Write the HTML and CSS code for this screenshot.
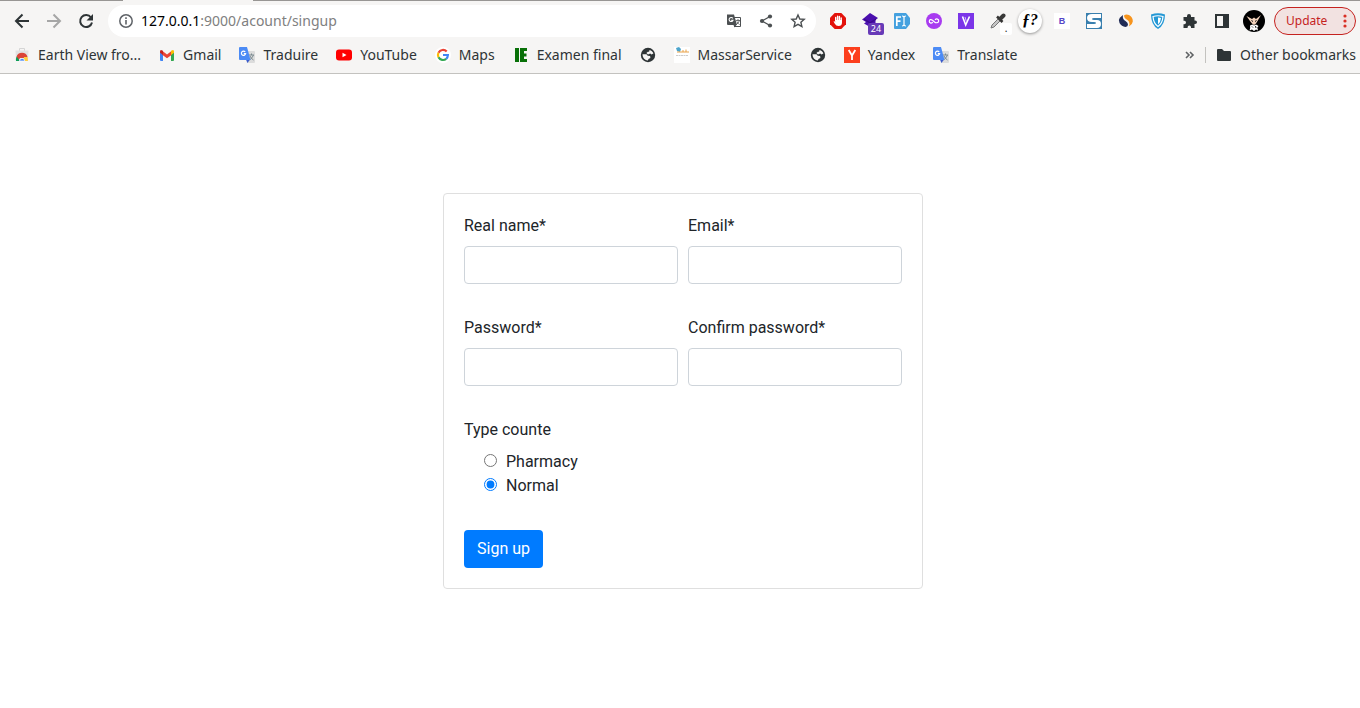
FILE: index.html
```
<!DOCTYPE html>
<html lang="en">
<head>
<meta charset="utf-8">
<title>Sign up</title>
<link rel="stylesheet" href="styles.css">
</head>
<body>
<svg class="sprites" aria-hidden="true">
  <symbol id="translate" viewBox="0 0 16 16">
    <path fill="#dcdcdc" d="M6 4h9q1 0 1 1v10q0 1-1 1H8z"/>
    <path fill="none" stroke="#7b8a90" stroke-width="1" d="M10 8h5M12.500 6.500v1.500M14.500 8q-1 3-4 5M11 9q1 2.500 3.500 4"/>
    <path fill="#3a5bcd" d="M7 12.500h4L8.500 16z"/>
    <path fill="#4c8bf5" d="M1 0h7l3.500 13H1q-1 0-1-1V1q0-1 1-1z"/>
    <path fill="none" stroke="#fff" stroke-width="1.200" d="M6.200 5A2.100 2.100 0 1 0 6.600 6.700H4.800"/>
  </symbol>
  <symbol id="globe" viewBox="0 0 16 16">
    <circle cx="8" cy="8" r="7.200" fill="#2e3436"/>
    <path fill="#f6f5f4" d="M9.500 3c1.800.4 3.300 1.600 3.900 3.500l-1.900.9-1.300-.9-2.200 1-1.600-1.400 1.500-1.400h1.200zM2.500 7.300h4l1.200 1.500 2.400.3.300 2-1.900.8-.6 1.700c-3-.3-5.300-2.700-5.400-6.300z"/>
  </symbol>
</svg>

<header class="browser">
  <div class="tabs"><span class="tab"></span></div>
  <div class="toolbar">
    <nav class="history" aria-label="History">
      <button class="tool" aria-label="Back"><svg width="16" height="16" viewBox="0 0 16 16"><path fill="none" stroke="#2e3436" stroke-width="2" d="M15 8H2M8.500 1.500L2 8l6.500 6.500"/></svg></button>
      <button class="tool" aria-label="Forward"><svg width="16" height="16" viewBox="0 0 16 16"><path fill="none" stroke="#a6a6a6" stroke-width="2" d="M1 8h13M7.500 1.500L14 8l-6.500 6.500"/></svg></button>
      <button class="tool" aria-label="Reload"><svg width="16" height="16" viewBox="0 0 16 16"><path fill="none" stroke="#2e3436" stroke-width="2" d="M13 4.500A6 6 0 1 0 14 9.500"/><path fill="#2e3436" d="M15 1v6.500H8.500z"/></svg></button>
    </nav>
    <div class="address">
      <svg width="16" height="16" viewBox="0 0 16 16"><circle cx="8" cy="8" r="6.200" fill="none" stroke="#5f6368" stroke-width="1.500"/><path fill="#5f6368" d="M7.200 7h1.600v4.500H7.200zM7.200 4.300h1.600v1.600H7.200z"/></svg>
      <a class="url" href="#">127.0.0.1<span class="path">:9000/acount/singup</span></a>
      <button class="tool" aria-label="Translate this page"><svg width="16" height="16" viewBox="0 0 16 16"><path fill="none" stroke="#4c5052" d="M8 4.500h6.500v9H8"/><path fill="#4c5052" d="M1 1.500h7l3 10.500H2q-1 0-1-1zM7.500 12h3l-2 2.500z"/><path fill="none" stroke="#fff" stroke-width="1.100" d="M6.800 5.400a2 2 0 1 0 .2 1.800H5.200"/><path fill="none" stroke="#4c5052" stroke-width=".8" d="M10 7.500h4M12 6v1.500M13.500 7.500q-1 2.500-3 4M11 8.500q1 2 2.500 3.200"/></svg></button>
      <button class="tool" aria-label="Share"><svg width="16" height="16" viewBox="0 0 16 16"><path fill="none" stroke="#4c5052" stroke-width="1.300" d="M12 3.500L4 8l8 4.500"/><g fill="#4c5052"><circle cx="12" cy="3.500" r="2.100"/><circle cx="4" cy="8" r="2.100"/><circle cx="12" cy="12.500" r="2.100"/></g></svg></button>
      <button class="tool" aria-label="Bookmark this page"><svg width="16" height="16" viewBox="0 0 16 16"><path fill="none" stroke="#4c5052" stroke-width="1.400" d="M8 2l1.800 4 4.400.4-3.300 2.900 1 4.300L8 11.300l-3.900 2.300 1-4.300-3.300-2.900L6.200 6z"/></svg></button>
    </div>
    <div class="extensions">
      <button class="tool" aria-label="Ad blocker"><svg width="16" height="16" viewBox="0 0 16 16"><path fill="#e3120b" d="M4.700 0h6.600L16 4.700v6.600L11.300 16H4.700L0 11.300V4.700z"/><path fill="none" stroke="#fff" stroke-width="1.400" stroke-linecap="round" d="M5.700 8V4.500M7.600 7V3.200M9.400 7V3.500M11.200 8V5"/><path fill="#fff" d="M5 7h7v2.500q0 3.500-3.500 3.500Q6 13 4.800 10.800L3.500 8.500q1-.7 2 .7z"/></svg></button>
      <button class="tool" aria-label="Layers, 24"><svg width="16" height="16" viewBox="0 0 16 16"><path fill="#4b0fae" d="M8 0l8 5-2.500 2v4L8 14l-6-3.500L4 9 0 6.500 2 5z"/><path fill="#3a0b8c" d="M2 5.500l6 3.500 6-3.500v1.500L8 10.500 2 7z"/></svg><span class="badge count">24</span></button>
      <button class="tool" aria-label="Font inspector"><svg width="16" height="16" viewBox="0 0 16 16"><path fill="#45a1df" d="M1 0h11l4 5v6l-4 5H1q-1 0-1-1V1q0-1 1-1z"/><path fill="none" stroke="#fff" stroke-width="1.700" d="M2.800 13V4H7M2.800 8.200h3.700"/><path fill="none" stroke="#fff" stroke-width="1.200" d="M8 3q2 0 2 1.500v7Q10 13 8 13M12 3q-2 0-2 1.500M10 11.500Q10 13 12 13"/></svg></button>
      <button class="tool" aria-label="Loop"><svg width="16" height="16" viewBox="0 0 16 16"><circle cx="8" cy="8" r="8" fill="#a83bf0"/><path fill="none" stroke="#fff" stroke-width="1.200" d="M6.800 9.200C5 10.800 3.300 9.800 3.300 8.200S5 5.900 6.500 7.300l2 1.700c1.500 1.300 4.200.8 4.200-1.100S10.500 5.300 9 6.800"/></svg></button>
      <button class="tool" aria-label="V tools"><svg width="16" height="16" viewBox="0 0 16 16"><path fill="#7b35e8" d="M0 0h16v16H0z"/><path fill="none" stroke="#fff" stroke-width="1.600" d="M4.500 3.500l3.200 8.500 3.800-8.500"/><path stroke="#d6bcff" d="M7 4l1.500 5"/></svg></button>
      <button class="tool" aria-label="Colour picker"><svg width="16" height="16" viewBox="0 0 16 16"><path fill="#c4c4c4" stroke="#777" d="M9 5l2 2-7 7-3 1 1-3z"/><path stroke="#333" stroke-width="2.500" d="M7 3.500L12.500 9"/><path stroke="#383838" stroke-width="4" stroke-linecap="round" d="M10.500 5.500L13.500 2.500"/></svg><span class="badge dot">.</span></button>
      <button class="tool" aria-label="What font"><span class="font-mark">ƒ?</span></button>
      <button class="tool" aria-label="B tools"><span class="letter">B</span></button>
      <button class="tool" aria-label="S tools"><svg width="16" height="16" viewBox="0 0 16 16"><path fill="#397fae" d="M0 0h16v16H0z"/><path fill="#fff" d="M15 1v4H8q-2 0-2 1t2 1h3q4 0 4 4t-4 4H1v-4h7q2 0 2-1T8 9H6Q1 9 1 5t5-4z"/></svg></button>
      <button class="tool" aria-label="Traffic statistics"><svg width="16" height="16" viewBox="0 0 16 16"><path fill="#202b55" d="M5 2L1.800 4.800Q0 7 1.500 10q2 3.500 6 4 2.500-.2 2.500-2.500 0-2-2.500-3.500Q4 6 5 2z"/><path fill="#f7941d" d="M6 2.500Q8 .8 11 2q4 2 3.800 6.500-.3 3-3.800 5 1.500-4-1.500-6.500Q6 5 6 2.500z"/></svg></button>
      <button class="tool" aria-label="Shield"><svg width="16" height="16" viewBox="0 0 16 16"><path fill="#2498d5" d="M1 1.500q7-2.500 14 0Q15 12 8 16 1 12 1 1.500z"/><path fill="none" stroke="#fff" stroke-width="1.200" d="M3 3.500q5-1.500 10 0Q12.500 10.500 8 13.500 3.500 10.500 3 3.500z"/><path fill="#fff" d="M8 4.500q1.800 0 3 .5-.5 4.500-3 6.500z"/></svg></button>
      <button class="tool" aria-label="Extensions"><svg width="16" height="16" viewBox="0 0 16 16"><path fill="#2e3436" d="M1.500 4H5V3a2 2 0 0 1 4 0v1h3.500v3.500h.7a1.800 1.800 0 0 1 0 3.600h-.7V15H9v-.8a1.700 1.700 0 0 0-3.400 0v.8H1.500v-3.800h.8a1.700 1.700 0 0 0 0-3.400h-.8z"/></svg></button>
      <button class="tool" aria-label="Side panel"><svg width="16" height="16" viewBox="0 0 16 16"><path fill="#2e3436" fill-rule="evenodd" d="M1 1h14v14H1zM3 3v10h6V3z"/></svg></button>
      <button class="tool" aria-label="Profile"><svg width="22" height="22" viewBox="0 0 22 22"><circle cx="11" cy="11" r="11"/><path fill="#f3d3bc" d="M3.500 6l5.500 3 2-1.500 2 1.500 5-4-3.500 6-1.500 2.500-2 1.500-2-1.500L7 11z"/><path fill="#fff" d="M7 15.500l2.500-1 1.500 1 2-1 2.500 1.500-1.200 1.500.7 3-2-1-2 1.500-2-1.500-2.500 1 .7-2.500z"/><path stroke="#111" d="M8.500 10.500l1.500 1M13.500 10.500l-1.500 1M9 16.500l1 1M12.500 16l.5 2"/></svg></button>
    </div>
    <button class="update">Update<svg width="4" height="14" viewBox="0 0 4 14"><g fill="#d93025"><circle cx="2" cy="2" r="1.600"/><circle cx="2" cy="7" r="1.600"/><circle cx="2" cy="12" r="1.600"/></g></svg></button>
  </div>
  <nav class="bookmarks" aria-label="Bookmarks">
    <a href="#"><svg width="16" height="16" viewBox="0 0 16 16"><path fill="none" stroke="#d5d5d5" d="M5.500 4V1.500h5V4"/><path fill="#e2e2e2" d="M1.500 3.500h13L14 14H2z"/><path fill="#db4437" d="M2.500 10a5.700 5.700 0 0 1 11 0l-3 1H6l-2 3z"/><path fill="#0f9d58" d="M2.700 9.500L6 14H2q-.3-2.500.7-4.500z"/><path fill="#ffcd40" d="M10 10h3.500q.6 2 .4 4H9z"/><path fill="#4285f4" stroke="#fff" stroke-width=".7" d="M5.500 14a2.600 2.600 0 0 1 5.200 0z"/></svg>Earth View fro...</a>
    <a href="#"><svg width="16" height="16" viewBox="0 0 16 16"><path fill="#4285f4" d="M1 5l3 2.500V14H2q-1 0-1-1z"/><path fill="#34a853" d="M12 7.500L15 5v8q0 1-1 1h-2z"/><path fill="#ea4335" d="M3.500 4L8 7.500 12.500 4v4L8 11.200 3.500 8z"/><path fill="#c5221f" d="M1 4.500Q1 2 3.500 3.500L4 4v4L1 5.800z"/><path fill="#fbbc04" d="M15 4.500Q15 2 12.500 3.500L12 4v4l3-2.200z"/></svg>Gmail</a>
    <a href="#"><svg width="16" height="16"><use href="#translate"/></svg>Traduire</a>
    <a href="#"><svg width="16" height="16" viewBox="0 0 16 16"><rect y="2.500" width="16" height="11" rx="3" fill="#f00"/><path fill="#fff" d="M6.500 5.700v4.600l4-2.300z"/></svg>YouTube</a>
    <a href="#"><svg width="16" height="16" viewBox="0 0 16 16"><circle cx="8" cy="8" r="8" fill="#fff"/><g fill="none" stroke-width="2.200"><path stroke="#ea4335" d="M3.500 5.700A5 5 0 0 1 11.700 4.600"/><path stroke="#fbbc04" d="M3.500 5.700a5 5 0 0 0 0 4.600"/><path stroke="#34a853" d="M3.500 10.300a5 5 0 0 0 7.700 1.500"/><path stroke="#4285f4" d="M11.200 11.800Q12.800 10.500 12.900 8H8"/></g></svg>Maps</a>
    <a href="#"><svg width="16" height="16" viewBox="0 0 16 16"><path fill="#087008" d="M2 1h4v14H2zM7 1h7v3h-3v2.500h2.500v3H11V12h3v3H7z"/></svg>Examen final</a>
    <a href="#" aria-label="Site"><svg width="16" height="16"><use href="#globe"/></svg></a>
    <a href="#"><svg width="16" height="16" viewBox="0 0 16 16"><path fill="#fff" d="M0 0h16v16H0z"/><path fill="#4ca4cc" d="M2 1l3-1 2 2-1 3-3-1z"/><path fill="none" stroke="#e9a248" d="M3 5h12M9 3v2M12 2.500V5"/><path stroke="#ccc" stroke-dasharray="2 .5" d="M2 8.500h12"/></svg>MassarService</a>
    <a href="#" aria-label="Site"><svg width="16" height="16"><use href="#globe"/></svg></a>
    <a href="#"><svg width="16" height="16" viewBox="0 0 16 16"><path fill="#fc3f1d" d="M0 0h16v16H0z"/><path fill="none" stroke="#fff" stroke-width="1.800" d="M4.700 3L8 8.500 11.300 3M8 8v5"/></svg>Yandex</a>
    <a href="#"><svg width="16" height="16"><use href="#translate"/></svg>Translate</a>
    <button class="more" aria-label="More bookmarks"><svg width="10" height="8" viewBox="0 0 10 8"><path fill="none" stroke="#5f6264" stroke-width="1.600" d="M1 1l3 3-3 3M5 1l3 3-3 3"/></svg></button>
    <a href="#" class="other"><svg width="16" height="16" viewBox="0 0 16 16"><path fill="#2e3436" d="M2 2h4l2 2h6q1 0 1 1v8q0 1-1 1H2q-1 0-1-1V3q0-1 1-1z"/></svg>Other bookmarks</a>
  </nav>
</header>

<main class="page">
  <form class="card">
    <div class="fields">
      <div class="field"><label for="name">Real name*</label><input id="name" type="text"></div>
      <div class="field"><label for="email">Email*</label><input id="email" type="email"></div>
      <div class="field"><label for="password">Password*</label><input id="password" type="password"></div>
      <div class="field"><label for="confirm">Confirm password*</label><input id="confirm" type="password"></div>
    </div>
    <fieldset class="types">
      <legend>Type counte</legend>
      <label class="choice"><input type="radio" name="type">Pharmacy</label>
      <label class="choice"><input type="radio" name="type" checked>Normal</label>
    </fieldset>
    <button class="submit" type="submit">Sign up</button>
  </form>
</main>
</body>
</html>
```
FILE: styles.css
```
* { box-sizing: border-box; }
body {
  margin: 0;
  background: #fff;
  color: #212529;
  font: 16px/24px Roboto, sans-serif;
}
button { font: inherit; border: 0; padding: 0; background: none; }
svg { display: block; flex: none; }
.sprites { position: absolute; width: 0; height: 0; }

.browser {
  background: #f6f5f4;
  border-bottom: 1px solid #c3c2bf;
  color: #2e3436;
  font-family: "Noto Sans", sans-serif;
}
.tabs { height: 1px; padding-left: 123px; background: #989694; }
.tab { display: block; width: 130px; height: 1px; background: #f6f5f4; }
.toolbar {
  display: flex;
  align-items: center;
  height: 40px;
  padding: 0 4px 0 6px;
}
.history, .extensions { display: flex; flex: none; }
.tool {
  position: relative;
  display: flex;
  flex: none;
  align-items: center;
  justify-content: center;
  width: 32px;
  height: 32px;
}
.address {
  display: flex;
  flex: 1;
  align-items: center;
  min-width: 0;
  height: 32px;
  margin: 0 6px;
  padding: 0 2px 0 10px;
  border-radius: 16px;
  background: #fff;
}
.url {
  flex: 1;
  padding-left: 7px;
  color: #000;
  font-size: 14px;
  text-decoration: none;
}
.path { color: #808080; }
.badge {
  position: absolute;
  border-radius: 2px;
  text-align: center;
}
.count {
  left: 14px;
  top: 18px;
  width: 16px;
  height: 12px;
  background: #673ab7;
  color: #fff;
  font-size: 9px;
  line-height: 12px;
}
.dot {
  left: 18px;
  top: 18px;
  width: 12px;
  height: 12px;
  background: #fff;
  color: #222;
  font-size: 10px;
  line-height: 10px;
}
.font-mark {
  width: 24px;
  height: 24px;
  border-radius: 50%;
  background: #fff;
  box-shadow: 0 1px 3px #0006;
  color: #000;
  font: italic bold 16px/22px "Liberation Serif", serif;
}
.letter {
  width: 16px;
  height: 16px;
  background: #fff;
  color: #5546c8;
  font: bold 9px/16px "Liberation Sans", sans-serif;
}
.update {
  display: flex;
  flex: none;
  align-items: center;
  justify-content: space-between;
  width: 82px;
  height: 28px;
  margin-left: 4px;
  padding: 0 8px 0 11px;
  border: 1px solid #c5221f;
  border-radius: 14px;
  background: #f2e2e1;
  color: #c5221f;
  font-size: 12px;
}
.bookmarks {
  display: flex;
  align-items: center;
  gap: 18px;
  height: 32px;
  padding: 0 4px 4px 14px;
  font-size: 14px;
  white-space: nowrap;
}
.bookmarks a {
  display: flex;
  align-items: center;
  gap: 8px;
  color: inherit;
  text-decoration: none;
}
.more { margin-left: auto; }
.bookmarks .other {
  margin-left: -8px;
  padding-left: 10px;
  border-left: 1px solid #c3c2bf;
  line-height: 16px;
}

.page {
  display: flex;
  justify-content: center;
  padding: 119px 0 24px 6px;
}
.card {
  width: 100%;
  max-width: 480px;
  padding: 20px;
  border: 1px solid #dfdfdf;
  border-radius: 4px;
}
.fields {
  display: grid;
  grid-template-columns: 1fr 1fr;
  gap: 32px 10px;
}
.field { display: grid; gap: 8px; }
.field input {
  width: 100%;
  height: 38px;
  padding: 6px 12px;
  border: 1px solid #ced4da;
  border-radius: 4px;
  font: inherit;
}
.types { margin: 32px 0; padding: 0; border: 0; }
.types legend { padding: 0; margin-bottom: 8px; }
.choice {
  display: flex;
  align-items: center;
  gap: 9px;
  padding-left: 20px;
}
.choice input {
  width: 13px;
  height: 13px;
  margin: 0 0 3px;
  accent-color: #007bff;
}
.submit {
  height: 38px;
  padding: 0 13px;
  border-radius: 4px;
  background: #007bff;
  color: #fff;
}
```
